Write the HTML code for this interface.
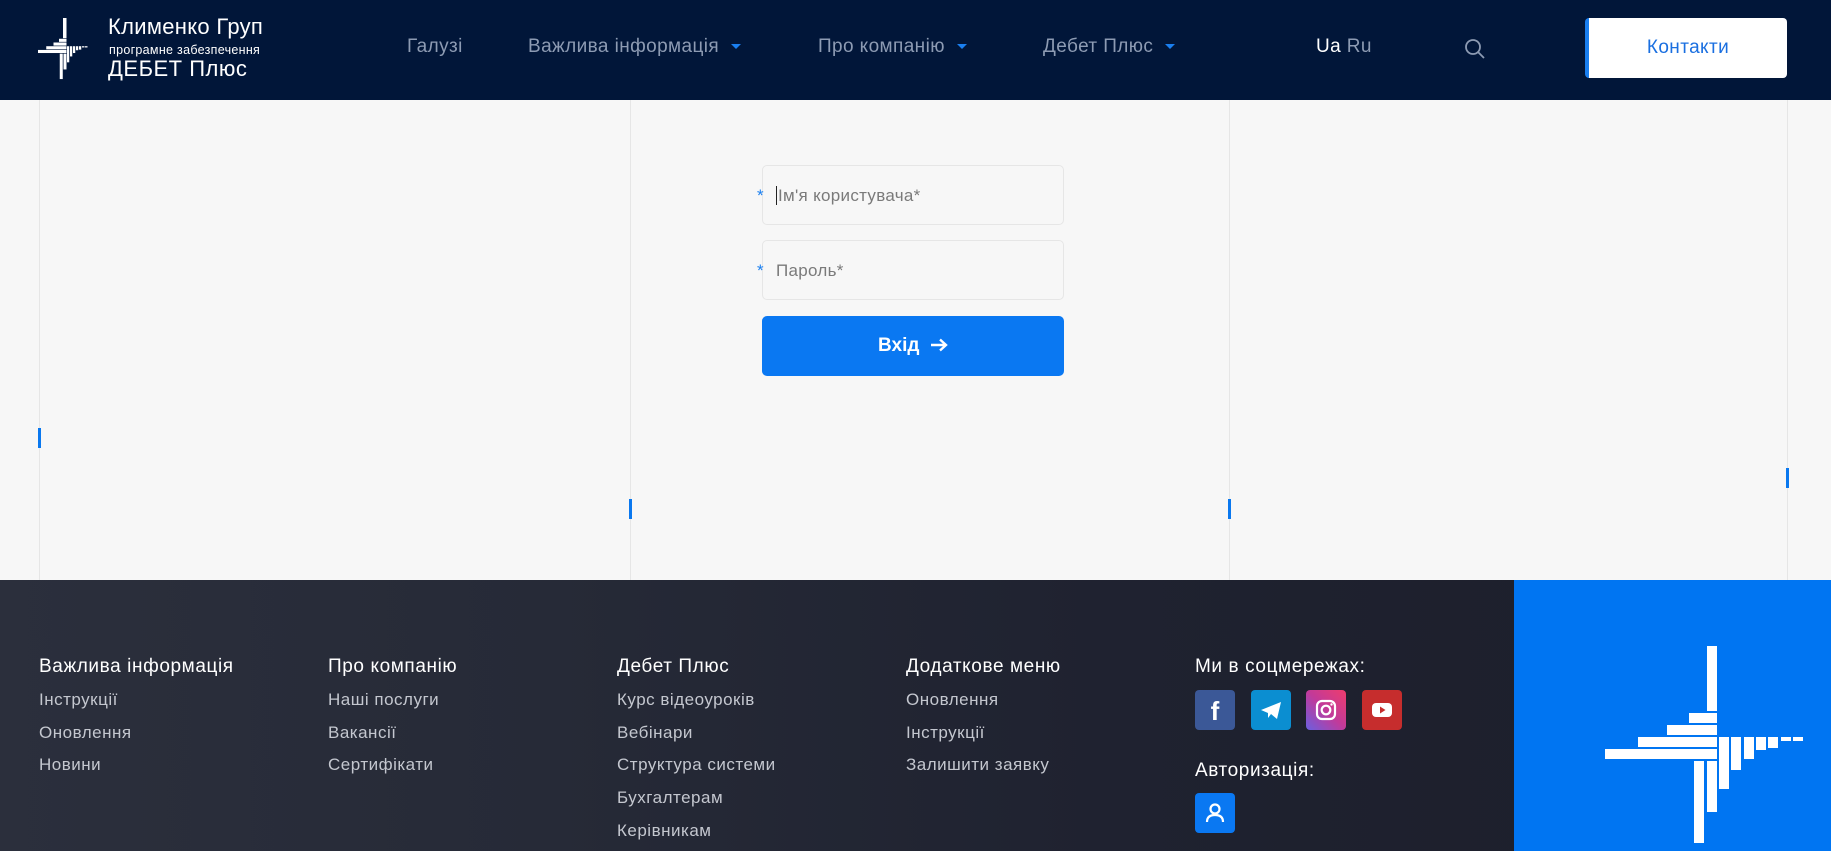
<!DOCTYPE html>
<html><head><meta charset="utf-8"><style>
*{margin:0;padding:0;box-sizing:border-box}
body{width:1831px;height:851px;overflow:hidden;background:#f7f7f7;font-family:"Liberation Sans","DejaVu Sans",sans-serif;position:relative}
.a{position:absolute;white-space:nowrap}
header{position:absolute;left:0;top:0;width:1831px;height:100px;background:#011639}
.nav{color:#8d9bb3;font-size:19px;top:36px;letter-spacing:0.4px}
.car{display:inline-block;width:0;height:0;border-left:5px solid transparent;border-right:5px solid transparent;border-top:5px solid #1a7ff0;margin-left:12px;vertical-align:middle}
.vl{position:absolute;top:100px;height:480px;width:1px;background:#e6e6e6}
.mk{position:absolute;width:3px;height:20px;background:#0a78ef}
.inp{position:absolute;left:762px;width:302px;height:60px;border:1px solid #e6e6e6;border-radius:5px;background:#f7f7f7;color:#7a7a7a;font-size:17px;padding:20px 0 0 13px;letter-spacing:0.3px}
.st{position:absolute;left:757px;color:#1a7ff0;font-size:17px}
footer{position:absolute;left:0;top:580px;width:1831px;height:271px;background:linear-gradient(90deg,#2b2f3c 0%,#262a37 30%,#1f2230 60%,#1c1e2a 100%)}
.h{color:#fff;font-size:19px;top:656px;letter-spacing:0.6px}
.l{color:#c4c7cf;font-size:17px;letter-spacing:0.5px}
.so{position:absolute;top:690px;width:40px;height:40px;border-radius:4px}
</style></head><body>
<header>
<svg class="a" style="left:0;top:0" width="100" height="100"><g fill="#fff" transform="translate(38,18) scale(0.25,0.31) translate(-1605,-646)">
<rect x="1705" y="646" width="14" height="65"/><rect x="1689" y="713" width="30" height="10"/><rect x="1667" y="725" width="52" height="10"/><rect x="1638" y="737" width="81" height="10"/><rect x="1605" y="749" width="114" height="10"/><rect x="1692" y="761" width="12" height="82"/><rect x="1707" y="761" width="12" height="51"/><rect x="1721" y="737" width="9" height="52"/><rect x="1733" y="737" width="9" height="33"/><rect x="1745" y="737" width="9" height="22"/><rect x="1757" y="737" width="9" height="13"/><rect x="1769" y="737" width="9" height="11"/><rect x="1781" y="737" width="10" height="4"/><rect x="1793" y="737" width="10" height="4"/></g></svg>
<div class="a" style="left:108px;top:14px;color:#fff;font-size:22px;letter-spacing:0.3px">Клименко Груп</div>
<div class="a" style="left:109px;top:43px;color:#fff;font-size:12.5px;letter-spacing:0.3px">програмне забезпечення</div>
<div class="a" style="left:108px;top:56px;color:#fff;font-size:22px;letter-spacing:0.5px">ДЕБЕТ Плюс</div>
<div class="a nav" style="left:407px">Галузі</div>
<div class="a nav" style="left:528px">Важлива інформація<span class="car"></span></div>
<div class="a nav" style="left:818px">Про компанію<span class="car"></span></div>
<div class="a nav" style="left:1043px">Дебет Плюс<span class="car"></span></div>
<div class="a nav" style="left:1316px;color:#fff">Ua <span style="color:#8d9bb3">Ru</span></div>
<svg class="a" style="left:1464px;top:38px" width="22" height="22"><circle cx="9" cy="9" r="7" fill="none" stroke="#8d9bb3" stroke-width="1.8"/><line x1="14" y1="14" x2="20" y2="20" stroke="#8d9bb3" stroke-width="1.8"/></svg>
<div class="a" style="left:1585px;top:18px;width:202px;height:60px;background:#fff;border-left:4px solid #1a7ff0;border-radius:4px;color:#1a6fe0;font-size:19px;text-align:center;line-height:60px;letter-spacing:0.4px">Контакти</div>
</header>
<div class="vl" style="left:39px"></div><div class="vl" style="left:630px"></div><div class="vl" style="left:1229px"></div><div class="vl" style="left:1787px"></div>
<div class="mk" style="left:38px;top:428px"></div><div class="mk" style="left:629px;top:499px"></div><div class="mk" style="left:1228px;top:499px"></div><div class="mk" style="left:1786px;top:468px"></div>
<div class="inp" style="top:165px"><span style="border-left:1px solid #222;padding-left:1px">Ім'я користувача*</span></div><div class="st" style="top:186px">*</div>
<div class="inp" style="top:240px">Пароль*</div><div class="st" style="top:261px">*</div>
<div class="a" style="left:762px;top:316px;width:302px;height:60px;background:#0a78f2;border-radius:5px;color:#fff;font-size:19px;font-weight:bold;text-align:center;line-height:60px">Вхід &nbsp;<svg width="18" height="14" style="vertical-align:-1px"><path d="M1 7 H16 M10 1.5 L16 7 L10 12.5" fill="none" stroke="#fff" stroke-width="2.4"/></svg></div>
<footer></footer>
<div class="a h" style="left:39px">Важлива інформація</div>
<div class="a l" style="left:39px;top:690px">Інструкції</div><div class="a l" style="left:39px;top:723px">Оновлення</div><div class="a l" style="left:39px;top:755px">Новини</div>
<div class="a h" style="left:328px">Про компанію</div>
<div class="a l" style="left:328px;top:690px">Наші послуги</div><div class="a l" style="left:328px;top:723px">Вакансії</div><div class="a l" style="left:328px;top:755px">Сертифікати</div>
<div class="a h" style="left:617px">Дебет Плюс</div>
<div class="a l" style="left:617px;top:690px">Курс відеоуроків</div><div class="a l" style="left:617px;top:723px">Вебінари</div><div class="a l" style="left:617px;top:755px">Структура системи</div><div class="a l" style="left:617px;top:788px">Бухгалтерам</div><div class="a l" style="left:617px;top:821px">Керівникам</div>
<div class="a h" style="left:906px">Додаткове меню</div>
<div class="a l" style="left:906px;top:690px">Оновлення</div><div class="a l" style="left:906px;top:723px">Інструкції</div><div class="a l" style="left:906px;top:755px">Залишити заявку</div>
<div class="a h" style="left:1195px">Ми в соцмережах:</div>
<div class="so" style="left:1195px;background:#3b5897;color:#fff;font:bold 26px 'Liberation Sans';text-align:center;line-height:42px">f</div>
<div class="so" style="left:1251px;background:#0b8ed1"><svg width="40" height="40"><path d="M10 20 L30 12 L26 29 L20 24 L17 28 L17 23 Z" fill="#fff"/></svg></div>
<div class="so" style="left:1306px;background:linear-gradient(45deg,#6a5fe0,#c13a9a,#ee3d6d)"><svg width="40" height="40"><rect x="11" y="11" width="18" height="18" rx="5" fill="none" stroke="#fff" stroke-width="2.2"/><circle cx="20" cy="20" r="4.3" fill="none" stroke="#fff" stroke-width="2.2"/><circle cx="25.5" cy="14.5" r="1.2" fill="#fff"/></svg></div>
<div class="so" style="left:1362px;background:#c62d2d"><svg width="40" height="40"><rect x="10" y="13" width="20" height="14" rx="4" fill="#fff"/><path d="M18 16.5 L23.5 20 L18 23.5Z" fill="#c62d2d"/></svg></div>
<div class="a h" style="left:1195px;top:760px">Авторизація:</div>
<div class="so" style="left:1195px;top:793px;background:#0a78f2"><svg width="40" height="40"><circle cx="20" cy="16" r="4.5" fill="none" stroke="#fff" stroke-width="2.2"/><path d="M12 29 Q12 22 20 22 Q28 22 28 29" fill="none" stroke="#fff" stroke-width="2.2"/></svg></div>
<div class="a" style="left:1514px;top:580px;width:317px;height:271px;background:#0075f2"></div>
<svg class="a" style="left:0;top:0" width="1831" height="851"><g fill="#fff">
<rect x="1707" y="646" width="10" height="65"/><rect x="1689" y="713" width="28" height="10"/><rect x="1667" y="725" width="50" height="10"/><rect x="1638" y="737" width="79" height="10"/><rect x="1605" y="749" width="112" height="10"/><rect x="1694" y="761" width="10" height="82"/><rect x="1707" y="761" width="10" height="51"/><rect x="1719" y="737" width="10" height="52"/><rect x="1731" y="737" width="10" height="33"/><rect x="1744" y="737" width="10" height="22"/><rect x="1756" y="737" width="10" height="13"/><rect x="1768" y="737" width="10" height="11"/><rect x="1781" y="737" width="10" height="4"/><rect x="1793" y="737" width="10" height="4"/></g></svg>
</body></html>
